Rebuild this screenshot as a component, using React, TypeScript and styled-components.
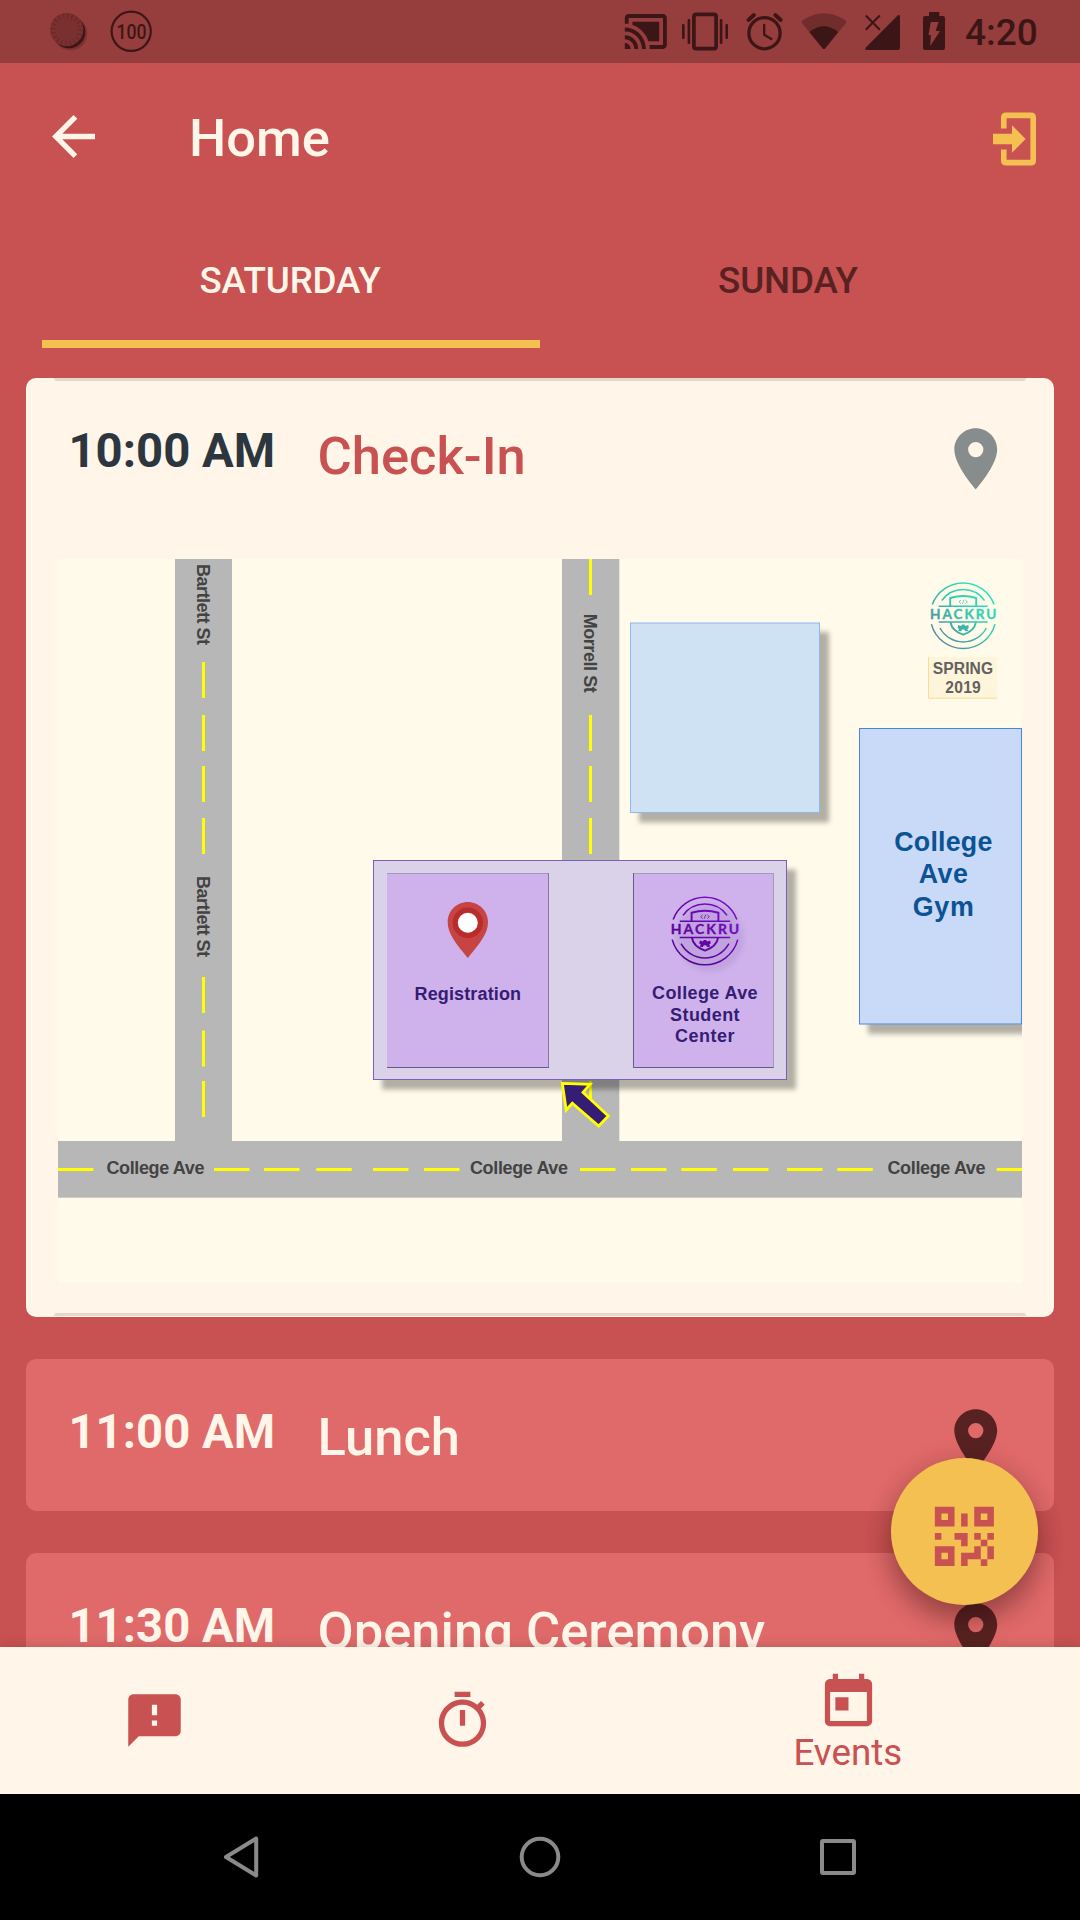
import React from 'react';
import styled, { createGlobalStyle } from 'styled-components';

const c = {
  red: '#c85151',
  status: '#963d3d',
  ink: '#3c1616',
  cream: '#fff5e8',
  yellow: '#f5c052',
  rose: '#e06969',
  maroon: '#592222',
};

const Global = createGlobalStyle`
  * { box-sizing: border-box; }
  body { margin: 0; background: ${c.red}; }
`;

const Screen = styled.div`
  position: relative;
  display: flex;
  flex-direction: column;
  width: 1080px;
  height: 1920px;
  overflow: hidden;
  background: ${c.red};
  font-family: Roboto, 'Liberation Sans', sans-serif;
  svg { display: block; flex: none; }
`;

const StatusBar = styled.div`
  display: flex;
  justify-content: space-between;
  height: 63px;
  padding: 0 43px 0 50px;
  background: ${c.status};
  flex: none;
`;

const StatusGroup = styled.div`
  display: flex;
  align-items: flex-start;
`;

const StatusItem = styled.div<{ $before?: number }>`
  height: 63px;
  margin-left: ${(p) => p.$before ?? 0}px;
`;

const Clock = styled.div`
  width: 72px;
  margin-left: 20px;
  color: ${c.ink};
  font-size: 37px;
  font-weight: 500;
  line-height: 44px;
  padding-top: 11px;
  white-space: nowrap;
`;

const AppBar = styled.header`
  display: flex;
  align-items: center;
  height: 147px;
  padding: 0 43px 0 52px;
  flex: none;
`;

const Heading = styled.h1`
  flex: 1;
  margin: 3px 0 0 94px;
  color: ${c.cream};
  font-size: 52.5px;
  font-weight: 500;
  line-height: 62px;
`;

const ExitSlot = styled.div`
  padding-top: 5px;
`;

const Tabs = styled.nav`
  display: flex;
  height: 138px;
  padding: 0 42px;
  flex: none;
`;

const Tab = styled.div<{ $active?: boolean }>`
  flex: 1;
  padding: 49px 2px 0 0;
  border-bottom: 8px solid ${(p) => (p.$active ? c.yellow : 'transparent')};
  color: ${(p) => (p.$active ? c.cream : c.maroon)};
  font-size: 36.75px;
  font-weight: 500;
  letter-spacing: -0.15px;
  line-height: 43px;
  text-align: center;
`;

const List = styled.main`
  flex: 1;
  min-height: 0;
  display: flex;
  flex-direction: column;
  gap: 42px;
  padding: 30px 26px 0;
  overflow: hidden;
`;

const Card = styled.section<{ $open?: boolean }>`
  flex: none;
  width: 1028px;
  height: ${(p) => (p.$open ? 938.7 : 152.2)}px;
  border-radius: 10px;
  background: ${(p) => (p.$open ? c.cream : c.rose)};
  overflow: hidden;
`;

const CardEdge = styled.div<{ $bottom?: boolean }>`
  height: 3px;
  margin: ${(p) => (p.$bottom ? '30px 28px 0' : '0 28px -3px')};
  border-radius: ${(p) => (p.$bottom ? '8px 8px 0 0' : '0 0 8px 8px')};
  background: #e3d8cb;
`;

const CardHead = styled.div`
  display: flex;
  align-items: flex-start;
  height: 181px;
  padding: 44px 42px 0 42.5px;
`;

const Time = styled.div<{ $open?: boolean }>`
  width: 249px;
  padding-top: 1px;
  color: ${(p) => (p.$open ? '#2c363f' : c.cream)};
  font-size: 47.25px;
  font-weight: 700;
  line-height: 56px;
  white-space: nowrap;
`;

const Title = styled.div<{ $open?: boolean }>`
  flex: 1;
  padding-top: 3px;
  color: ${(p) => (p.$open ? c.red : c.cream)};
  font-size: 52.5px;
  font-weight: 500;
  line-height: 62px;
  white-space: nowrap;
`;

const MapFrame = styled.div`
  padding-left: 32px;
`;

const BottomNav = styled.nav`
  position: relative;
  display: flex;
  height: 147px;
  flex: none;
  background: ${c.cream};
  color: ${c.red};
  box-shadow: 0 0 12px rgba(0, 0, 0, 0.16);
`;

const NavItem = styled.div<{ $active?: boolean }>`
  flex: ${(p) => (p.$active ? 1.5 : 1)} 1 0;
  display: flex;
  flex-direction: column;
  align-items: center;
  padding-top: ${(p) => (p.$active ? 23.5 : 41.7)}px;
`;

const NavLabel = styled.span`
  margin: -2.5px 1.5px 0 0;
  font-size: 36.75px;
  line-height: 43px;
`;

const SystemBar = styled.div`
  display: flex;
  align-items: center;
  justify-content: space-between;
  height: 126px;
  padding: 0 222px;
  flex: none;
  background: #000;
`;

const Fab = styled.div`
  position: absolute;
  left: 891px;
  top: 1458px;
  width: 147px;
  height: 147px;
  display: flex;
  padding: 39px 0 0 34px;
  border-radius: 50%;
  background: ${c.yellow};
  box-shadow: 0 16px 27px rgba(30, 0, 0, 0.3), 0 3px 28px rgba(30, 0, 0, 0.13);
`;

const Pin = ({ color }: { color: string }) => (
  <svg width="73.5" height="73.5" viewBox="0 0 24 24" fill={color}>
    <path d="M12 2C8.13 2 5 5.13 5 9c0 5.25 7 13 7 13s7-7.75 7-13c0-3.87-3.13-7-7-7zm0 9.5a2.5 2.5 0 0 1 0-5 2.5 2.5 0 0 1 0 5z" />
  </svg>
);

const NavIcon = ({ d }: { d: string }) => (
  <svg width="63" height="63" viewBox="0 0 24 24" fill="currentColor">
    <path d={d} />
  </svg>
);

const StatusIcons = () => (
  <StatusBar>
    <StatusGroup>
      <StatusItem>
        <svg width="38" height="63" viewBox="0 0 38 63">
          <circle cx="20.5" cy="33.5" r="16.8" fill="#6d2a2a" opacity=".6" />
          <circle cx="19" cy="32" r="16.3" fill={c.ink} />
          <circle cx="16.7" cy="29.6" r="16.6" fill="#7b3030" />
          <circle cx="16.7" cy="29.6" r="13.7" fill="none" stroke="#6c2929" strokeWidth="5" strokeDasharray="1.4 2.9" />
        </svg>
      </StatusItem>
      <StatusItem $before={22}>
        <svg width="43" height="63" viewBox="0 0 43 63">
          <circle cx="21.2" cy="31.3" r="19.6" fill="none" stroke={c.ink} strokeWidth="2.2" />
          <text x="21.4" y="39" textAnchor="middle" textLength="30" lengthAdjust="spacingAndGlyphs" fontFamily="Roboto, sans-serif" fontSize="21" fontWeight="500" fill={c.ink}>100</text>
        </svg>
      </StatusItem>
    </StatusGroup>
    <StatusGroup>
      <StatusItem>
        <svg width="44" height="63" viewBox="0 0 44 63" fill={c.ink}>
          <path transform="translate(-1.1 8.2) scale(1.91 1.94)" d="M1 18v3h3c0-1.66-1.34-3-3-3zm0-4v2c2.76 0 5 2.24 5 5h2c0-3.87-3.13-7-7-7zm18-7H5v1.63c3.96 1.28 7.09 4.41 8.37 8.37H19V7zM1 10v2c4.97 0 9 4.03 9 9h2c0-6.08-4.93-11-11-11zm20-7H3c-1.1 0-2 .9-2 2v3h2V5h18v14h-7v2h7c1.1 0 2-.9 2-2V5c0-1.1-.9-2-2-2z" />
        </svg>
      </StatusItem>
      <StatusItem $before={14}>
        <svg width="46" height="63" viewBox="0 0 46 63" fill={c.ink}>
          <rect x="11.9" y="14.3" width="22.2" height="34.4" rx="2.2" fill="none" stroke={c.ink} strokeWidth="3.7" />
          <rect x="0" y="24" width="2.6" height="15" rx="1" />
          <rect x="5.6" y="19" width="2.6" height="25" rx="1" />
          <rect x="37.8" y="19" width="2.6" height="25" rx="1" />
          <rect x="43.4" y="24" width="2.6" height="15" rx="1" />
        </svg>
      </StatusItem>
      <StatusItem $before={18}>
        <svg width="37" height="63" viewBox="0 0 37 63" fill="none" stroke={c.ink} strokeLinecap="round" strokeLinejoin="round">
          <circle cx="18.5" cy="33.2" r="15.6" strokeWidth="3.2" />
          <path d="M2.5 20l5.4-5M34.7 20l-5.4-5" strokeWidth="3.8" />
          <path d="M18.2 25v9.8l7.2 4.2" strokeWidth="2.3" />
        </svg>
      </StatusItem>
      <StatusItem $before={18}>
        <svg width="46" height="63" viewBox="0 0 46 63">
          <path d="M1.2 23.2Q-.1 21.4 2 20.1Q22.9 6.3 44 20.1Q46 21.4 44.8 23.2L24 48.4q-1.1 1.1-2.2 0z" fill="#712c2c" />
          <path d="M8.3 32Q23 20.4 37.3 32L24 48.4q-1.1 1.1-2.2 0z" fill={c.ink} />
        </svg>
      </StatusItem>
      <StatusItem $before={18}>
        <svg width="36" height="63" viewBox="0 0 36 63">
          <path d="M35 16.8V48q0 2-2 2H1.8Q-.8 50 .8 47.4L32.9 15.2Q35 14.3 35 16.8z" fill={c.ink} />
          <path d="M.8 15.5l14 14.2M14.8 15.5L.8 29.7" stroke={c.ink} strokeWidth="2.1" />
        </svg>
      </StatusItem>
      <StatusItem $before={22}>
        <svg width="22" height="63" viewBox="0 0 22 63">
          <path d="M6 12h10.3v4H20q2 0 2 2v30q0 2-2 2H2q-2 0-2-2V18q0-2 2-2h4z" fill={c.ink} />
          <path d="M7.8 22h7.8l-3 9H17L7.2 46l.7-11H5.5z" fill={c.status} />
        </svg>
      </StatusItem>
      <Clock>4:20</Clock>
    </StatusGroup>
  </StatusBar>
);

type Tone = 'teal' | 'violet';

const Emblem = ({ x, y, scale, tone }: { x: number; y: number; scale: number; tone: Tone }) => {
  const paint = `url(#${tone})`;
  return (
    <g transform={`translate(${x} ${y}) scale(${scale})`} fill="none" stroke={paint} strokeWidth="1.5">
      <path d="M-30.9 -11.2A32.9 32.9 0 0 1 30.9 -11.2M-31.8 8.4A32.9 32.9 0 0 0 31.8 8.4" />
      <path d="M-21.4 -15.2A26.3 26.3 0 0 1 21.4 -15.2M-23.2 12.3A26.3 26.3 0 0 0 23.2 12.3" />
      <path d="M-24.5 -9.5H24.5M-24.5 6.4H24.5" />
      <path d="M-13 -9.5V-17.7Q0 -21.8 13 -17.7V-9.5M-12.7 6.4Q-11.5 15 0 19Q11.5 15 12.7 6.4" strokeWidth="1.9" />
      <path d="M-2.2 -15.7l-2 1.8 2 1.8M2.2 -15.7l2 1.8 -2 1.8M.7 -15.9L-.7 -12" strokeWidth=".8" />
      <path d="M-5 9.2l3 1 .8-1.5h2.4l.8 1.5 3-1 .6 3-1.5 1 1 2.2-3 .2-1-1.7h-2.2l-1 1.7-3-.2 1-2.2-1.5-1z" fill={paint} stroke="none" />
      <text x="-33.2" y="3.3" textLength="66.4" lengthAdjust="spacing" fontFamily="Lato, sans-serif" fontSize="13.6" fontWeight="700" fill={paint} stroke={paint} strokeWidth=".3">HACKRU</text>
    </g>
  );
};

const Label = styled.text<{ $size: number }>`
  font-family: 'Liberation Sans', Arial, sans-serif;
  font-weight: 700;
  font-size: ${(p) => p.$size}px;
  text-anchor: middle;
`;

const bartlettDashes = [662, 715, 766, 818, 977, 1030.5, 1081];
const morrellDashes = [559, 715, 766, 818, 1081];
const collegeDashes = [58, 214, 264, 316.3, 373, 424, 580, 631, 681.3, 733, 787, 837.3, 996.7];

// Venue map; the viewBox keeps the screen's own coordinates.
const VenueMap = () => (
  <svg width="964" height="724" viewBox="58 559 964 724">
    <defs>
      <linearGradient id="teal" gradientUnits="userSpaceOnUse" x1="-24" y1="24" x2="24" y2="-24">
        <stop offset="0" stopColor="#4e8d9b" />
        <stop offset=".65" stopColor="#2fd0b4" />
        <stop offset="1" stopColor="#2be3bd" />
      </linearGradient>
      <linearGradient id="violet" gradientUnits="userSpaceOnUse" x1="-24" y1="24" x2="24" y2="-24">
        <stop offset="0" stopColor="#560090" />
        <stop offset="1" stopColor="#7a0ccb" />
      </linearGradient>
      <filter id="drop" x="-10%" y="-10%" width="125%" height="125%">
        <feDropShadow dx="9" dy="9.5" stdDeviation="2.8" floodColor="#000" floodOpacity=".3" />
      </filter>
      <filter id="soft" x="-30%" y="-30%" width="160%" height="160%">
        <feGaussianBlur stdDeviation="2.5" />
      </filter>
    </defs>
    <rect x="58" y="559" width="964" height="724" fill="#fffaea" />
    <g fill="#b7b7b7">
      <rect x="175" y="559" width="57" height="583" />
      <rect x="562" y="559" width="57.3" height="583" />
      <rect x="58" y="1141" width="964" height="56.7" />
    </g>
    <g fill="#ffff00">
      {bartlettDashes.map((y) => <rect key={y} x="202" y={y} width="3" height="36" />)}
      {morrellDashes.map((y) => <rect key={y} x="589" y={y} width="3" height="36" />)}
      {collegeDashes.map((x) => <rect key={x} x={x} y="1168" width="35.5" height="3" />)}
    </g>
    <g fill="#434343">
      <Label $size={18} transform="translate(197 604.4) rotate(90)" textLength="81">Bartlett St</Label>
      <Label $size={18} transform="translate(197 916.4) rotate(90)" textLength="81">Bartlett St</Label>
      <Label $size={18} transform="translate(584 653.2) rotate(90)" textLength="79">Morrell St</Label>
      <Label $size={18} x="155.4" y="1174.3" textLength="98">College Ave</Label>
      <Label $size={18} x="519" y="1174.3" textLength="98">College Ave</Label>
      <Label $size={18} x="936.5" y="1174.3" textLength="98">College Ave</Label>
    </g>

    <rect x="630.5" y="623" width="189" height="189.5" fill="#cfe2f3" stroke="#90b6ee" filter="url(#drop)" />
    <rect x="859.5" y="728.5" width="162" height="295.5" fill="#c9daf8" stroke="#4a86d8" filter="url(#drop)" />
    <g fill="#0b5394">
      <Label $size={26.8} x="943.3" y="850.6" textLength="98">College</Label>
      <Label $size={26.8} x="943.3" y="883.4" textLength="49">Ave</Label>
      <Label $size={26.8} x="943.3" y="916.4" textLength="61">Gym</Label>
    </g>

    <Emblem x={963.2} y={615.7} scale={1} tone="teal" />
    <rect x="928" y="657" width="69" height="41.5" fill="#fff5db" />
    <path d="M928.5 657V698.2H997" fill="none" stroke="#fbdc92" />
    <g fill="#616161">
      <Label $size={15.6} x="962.9" y="674.2" textLength="60.5">SPRING</Label>
      <Label $size={15.6} x="963" y="693" textLength="35.5">2019</Label>
    </g>

    <rect x="373.5" y="860.5" width="413" height="219" fill="#d9d2e9" stroke="#7a60b4" filter="url(#drop)" />
    <rect x="387" y="873" width="162" height="195" fill="#cfb2ec" />
    <path d="M387 873.5H549" stroke="#a597bd" />
    <path d="M548.5 873V1068" stroke="#8777a8" />
    <path d="M387 1067.5H549" stroke="#65598a" />
    <rect x="633" y="873" width="141" height="195" fill="#cfb2ec" />
    <path d="M633 873.5H774M773.5 873V1068" stroke="#a597bd" fill="none" />
    <path d="M633.5 873V1067.5H773.5" stroke="#65598a" fill="none" />

    <path d="M467.8 902C456.5 902 447.7 911 447.7 922C447.7 934 456 943.5 467.8 958C479.5 943.5 488 934 488 922C488 911 479 902 467.8 902z" fill="#c64444" />
    <circle cx="467.8" cy="922.8" r="15.2" fill="#b92c2c" />
    <circle cx="467.8" cy="922.8" r="10" fill="#fff" />
    <circle cx="710" cy="938" r="34" fill="#8c6fae" opacity=".2" filter="url(#soft)" />
    <Emblem x={705} y={931} scale={1.03} tone="violet" />
    <g fill="#351c75">
      <Label $size={18} x="467.8" y="1000.2" textLength="106.5">Registration</Label>
      <Label $size={18} x="704.8" y="999" textLength="105.5">College Ave</Label>
      <Label $size={18} x="704.8" y="1020.7" textLength="69.5">Student</Label>
      <Label $size={18} x="704.8" y="1042.3" textLength="59.5">Center</Label>
    </g>
    <path d="M562.3 1083.3L590 1084.3L583 1092.3L608.3 1116L598.7 1126L572.3 1103.3L566.2 1110z" fill="#351c75" stroke="#ffff00" strokeWidth="2.8" />
  </svg>
);

type Event = { time: string; title: string; open?: boolean };

const events: Event[] = [
  { time: '10:00 AM', title: 'Check-In', open: true },
  { time: '11:00 AM', title: 'Lunch' },
  { time: '11:30 AM', title: 'Opening Ceremony' },
];

const EventCard = ({ time, title, open }: Event) => (
  <Card $open={open}>
    {open && <CardEdge />}
    <CardHead>
      <Time $open={open}>{time}</Time>
      <Title $open={open}>{title}</Title>
      <Pin color={open ? '#878c8d' : c.maroon} />
    </CardHead>
    {open && (
      <>
        <MapFrame><VenueMap /></MapFrame>
        <CardEdge $bottom />
      </>
    )}
  </Card>
);

const icons = {
  feedback: 'M20 2H4c-1.1 0-1.99.9-1.99 2L2 22l4-4h14c1.1 0 2-.9 2-2V4c0-1.1-.9-2-2-2zm-7 12h-2v-2h2v2zm0-4h-2V6h2v4z',
  timer: 'M15 1H9v2h6V1zm-4 13h2V8h-2v6zm8.03-6.61l1.42-1.42c-.43-.51-.9-.99-1.41-1.41l-1.42 1.42A8.962 8.962 0 0 0 12 4c-4.97 0-9 4.03-9 9s4.02 9 9 9a8.994 8.994 0 0 0 7.03-14.61zM12 20c-3.87 0-7-3.13-7-7s3.13-7 7-7 7 3.13 7 7-3.13 7-7 7z',
  today: 'M19 3h-1V1h-2v2H8V1H6v2H5c-1.11 0-1.99.9-1.99 2L3 19c0 1.1.89 2 2 2h14c1.1 0 2-.9 2-2V5c0-1.1-.9-2-2-2zm0 16H5V8h14v11zM7 10h5v5H7z',
};

export default function App() {
  return (
    <Screen>
      <Global />
      <StatusIcons />
      <AppBar>
        <svg width="43" height="43" viewBox="4 4 16 16" fill={c.cream}>
          <path d="M20 11H7.83l5.59-5.59L12 4l-8 8 8 8 1.41-1.41L7.83 13H20v-2z" />
        </svg>
        <Heading>Home</Heading>
        <ExitSlot>
          <svg width="44" height="54" viewBox="0 0 44 54">
            <path d="M10.8 16.5V5.6q0-2.2 2.2-2.2H38q2.2 0 2.2 2.2V48.4q0 2.2-2.2 2.2H13q-2.2 0-2.2-2.2V37.5" fill="none" stroke={c.yellow} strokeWidth="5.6" />
            <path d="M0 21.7H19V13.2L32.6 27L19 40.8V32.3H0z" fill={c.yellow} />
          </svg>
        </ExitSlot>
      </AppBar>
      <Tabs>
        <Tab $active>SATURDAY</Tab>
        <Tab>SUNDAY</Tab>
      </Tabs>
      <List>
        {events.map((e) => <EventCard key={e.time} {...e} />)}
      </List>
      <Fab>
        <svg width="78.75" height="78.75" viewBox="0 0 24 24" fill={c.red}>
          <path d="M3,11H5V13H3V11M11,5H13V9H11V5M9,11H13V15H11V13H9V11M15,11H17V13H19V11H21V13H19V15H21V19H19V21H17V19H13V21H11V17H15V15H17V13H15V11M19,19V15H17V19H19M15,3H21V9H15V3M17,5V7H19V5H17M3,3H9V9H3V3M5,5V7H7V5H5M3,15H9V21H3V15M5,17V19H7V17H5Z" />
        </svg>
      </Fab>
      <BottomNav>
        <NavItem><NavIcon d={icons.feedback} /></NavItem>
        <NavItem><NavIcon d={icons.timer} /></NavItem>
        <NavItem $active>
          <NavIcon d={icons.today} />
          <NavLabel>Events</NavLabel>
        </NavItem>
      </BottomNav>
      <SystemBar>
        <svg width="40" height="44" viewBox="0 0 40 44" fill="none" stroke="#8a8a8a" strokeWidth="4" strokeLinejoin="round">
          <path d="M34.2 3.5V40.5L4 22z" />
        </svg>
        <svg width="42" height="42" viewBox="0 0 42 42" fill="none" stroke="#8a8a8a" strokeWidth="4">
          <circle cx="21" cy="21" r="18.3" />
        </svg>
        <svg width="40" height="40" viewBox="0 0 40 40" fill="none" stroke="#8a8a8a" strokeWidth="4">
          <rect x="4" y="4" width="32" height="32" rx="1" />
        </svg>
      </SystemBar>
    </Screen>
  );
}
